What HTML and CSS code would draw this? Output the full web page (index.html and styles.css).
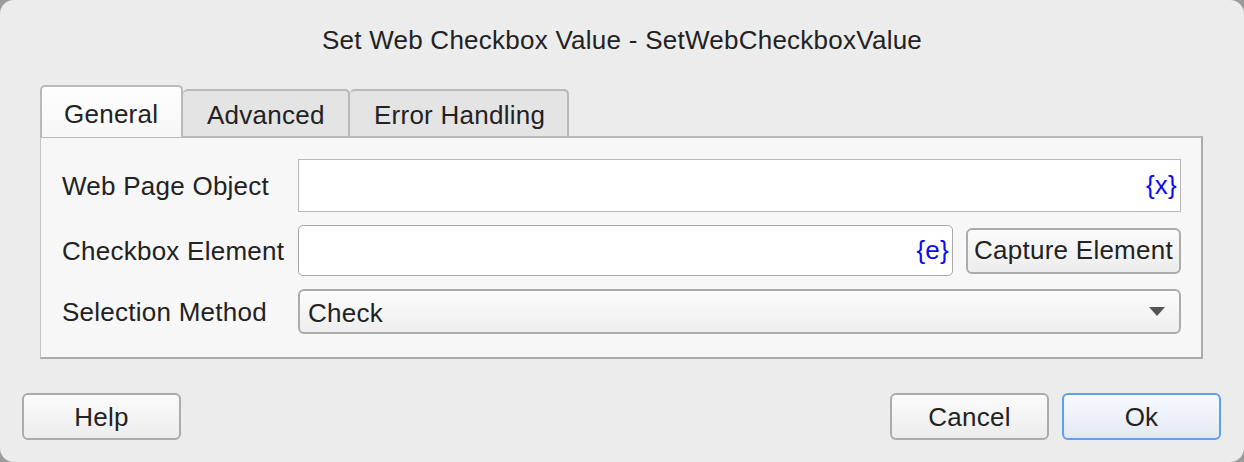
FILE: index.html
```html
<!DOCTYPE html>
<html>
<head>
<meta charset="utf-8">
<link rel="stylesheet" href="styles.css">
</head>
<body>
<div class="window">
  <div class="title">Set Web Checkbox Value - SetWebCheckboxValue</div>
  <div class="tabs">
    <div class="tab active">General</div>
    <div class="tab">Advanced</div>
    <div class="tab">Error Handling</div>
  </div>
  <div class="panel">
    <div class="label">Web Page Object</div>
    <div class="field square"><span class="var">{x}</span></div>

    <div class="label">Checkbox Element</div>
    <div class="row">
      <div class="field rounded"><span class="var">{e}</span></div>
      <div class="btn capture">Capture Element</div>
    </div>

    <div class="label">Selection Method</div>
    <div class="select"><span class="value">Check</span><span class="arrow"></span></div>
  </div>
  <div class="footer">
    <div class="btn action">Help</div>
    <div class="spacer"></div>
    <div class="btn action">Cancel</div>
    <div class="btn action primary">Ok</div>
  </div>
</div>
</body>
</html>
```

FILE: styles.css
```css
html, body {
  margin: 0;
  padding: 0;
}
body {
  background: #9c9c9c;
  font-family: "Liberation Sans", Arial, sans-serif;
  font-size: 26px;
  letter-spacing: 0.25px;
  color: #222;
  width: 1244px;
  height: 462px;
  overflow: hidden;
  white-space: nowrap;
}
.window {
  width: 1244px;
  height: 462px;
  background: #ececec;
  border-radius: 14px;
  box-sizing: border-box;
  display: flex;
  flex-direction: column;
}
.title {
  text-align: center;
  line-height: 30px;
  padding-top: 25px;
  height: 30px;
}
.tabs {
  display: flex;
  align-items: flex-end;
  margin-top: 30px;
  margin-left: 40px;
  height: 51px;
  position: relative;
  z-index: 1;
}
.tab {
  height: 47px;
  box-sizing: border-box;
  padding: 0 0 0 24px;
  line-height: 48px;
  background: #e4e4e4;
  border: 2px solid #b9b9b9;
  border-bottom: none;
  border-left: none;
  border-radius: 5px 5px 0 0;
  flex: none;
}
.tab.active {
  height: 52px;
  margin-bottom: -1px;
  line-height: 54px;
  background: linear-gradient(#fdfdfd, #f7f7f7);
  border-left: 2px solid #b9b9b9;
  padding: 0 0 0 22px;
  width: 143px;
}
.tab:nth-child(2) { width: 167px; }
.tab:nth-child(3) { width: 219px; }
.panel {
  margin-left: 40px;
  width: 1163px;
  height: 223px;
  box-sizing: border-box;
  background: #f7f7f7;
  border: 1px solid #c4c4c4;
  border-top: 2px solid #b9b9b9;
  border-right: 2px solid #ababab;
  border-bottom: 2px solid #ababab;
  padding: 21px 20px 0 21px;
  display: grid;
  grid-template-columns: 236px 1fr;
  grid-template-rows: 53px 51px 45px;
  row-gap: 13px;
  align-items: center;
}
.label {
  line-height: 30px;
}
.field {
  height: 100%;
  box-sizing: border-box;
  background: #fff;
  border: 1px solid #b8b8b8;
  display: flex;
  align-items: center;
  justify-content: flex-end;
  padding-right: 3px;
}
.field.rounded {
  border-radius: 5px;
  border-color: #a8a8a8;
  flex: 1;
}
.var {
  color: #0b0bf2;
}
.row {
  display: flex;
  align-items: center;
  gap: 13px;
  height: 100%;
}
.btn {
  box-sizing: border-box;
  border: 2px solid #ababab;
  border-radius: 6px;
  background: linear-gradient(#fbfbfb, #ececec);
  display: flex;
  align-items: center;
  justify-content: center;
}
.capture {
  width: 215px;
  height: 46px;
}
.select {
  height: 45px;
  box-sizing: border-box;
  border: 2px solid #ababab;
  border-radius: 6px;
  background: linear-gradient(#fcfcfc, #eeeeee);
  display: flex;
  align-items: center;
  justify-content: space-between;
  padding: 0 14px 0 8px;
}
.value {
  padding-top: 3px;
}
.arrow {
  width: 0;
  height: 0;
  border-left: 8px solid transparent;
  border-right: 8px solid transparent;
  border-top: 9px solid #555;
}
.footer {
  display: flex;
  align-items: center;
  margin-top: 34px;
  padding: 0 23px 0 22px;
  gap: 13px;
}
.spacer {
  flex: 1;
}
.action {
  width: 159px;
  height: 47px;
  padding-top: 2px;
}
.primary {
  border-color: #5d9ff0;
  background: linear-gradient(#f7f9fd, #e3e9f3);
}
```
